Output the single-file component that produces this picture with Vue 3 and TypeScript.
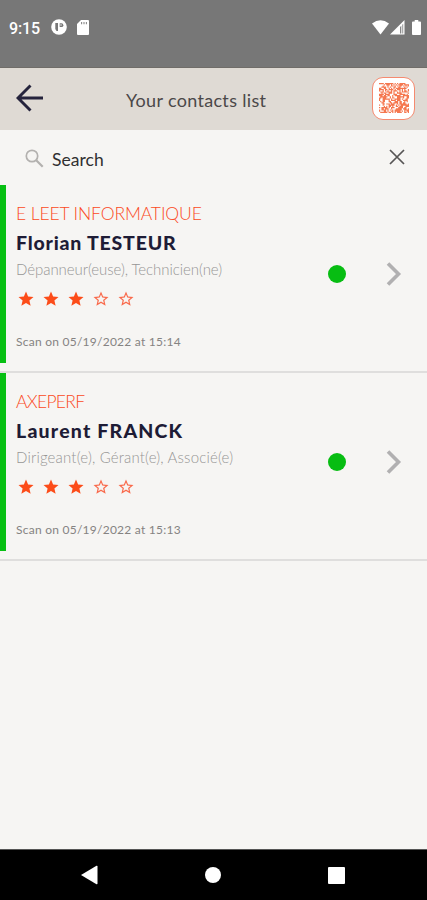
<script setup lang="ts">
interface Contact {
  company: string
  name: string
  jobs: string
  rating: number
  scan: string
  key: string
}

const contacts: Contact[] = [
  { key: 'florian', company: 'E LEET INFORMATIQUE', name: 'Florian TESTEUR', jobs: 'Dépanneur(euse), Technicien(ne)', rating: 3, scan: 'Scan on 05/19/2022 at 15:14' },
  { key: 'laurent', company: 'AXEPERF', name: 'Laurent FRANCK', jobs: 'Dirigeant(e), Gérant(e), Associé(e)', rating: 3, scan: 'Scan on 05/19/2022 at 15:13' },
]

// Modules of the QR badge, from a small seeded generator
const size = 25
let seed = 77
let qrPath = ''
for (let y = 0; y < size; y++) {
  for (let x = 0; x < size; x++) {
    seed ^= seed << 13
    seed ^= seed >>> 17
    seed ^= seed << 5
    if ((seed >>> 0) / 4294967296 < 0.6) qrPath += `M${x} ${y}h1v1h-1z`
  }
}
</script>

<template>
  <div class="screen">
    <header class="status">
      <span class="clock">9:15</span>
      <svg class="app-dot" viewBox="0 0 16 16"><circle cx="8" cy="8" r="7.8" fill="#fff" /><path d="M4.300 4h2.700v8H5.500L4.300 10z" fill="#777" /><path d="M8.700 4.300h1.800a1.700 1.700 0 0 1 0 3.700H8.700z" fill="#777" /><circle cx="10" cy="6" r=".7" fill="#fff" /></svg>
      <svg class="sd" viewBox="0 0 12 15"><path d="M4 0h7a1 1 0 0 1 1 1v13a1 1 0 0 1-1 1H1a1 1 0 0 1-1-1V4z" fill="#fff" /><path d="M4.6 2v2.3M7 2v2.3M9.4 2v2.3" stroke="#888" stroke-width="1.1" /></svg>
      <div class="signals">
        <svg width="17" height="15" viewBox="0 0 17 15"><path d="M0 3.5Q8.5-2.8 17 3.5L8.5 14.5z" fill="#fff" /></svg>
        <svg width="15" height="15" viewBox="0 0 15 15"><path d="M0 14.5 14.5 0v14.5z" fill="#fff" /><path d="M10 7v6.500h1.300V5.700zM12.300 4.700v8.800h.9V3.800z" fill="#888" /></svg>
        <svg class="battery" width="9" height="15" viewBox="0 0 10 15" preserveAspectRatio="none"><path d="M3 0h4v1.5h2a1 1 0 0 1 1 1V14a1 1 0 0 1-1 1H1a1 1 0 0 1-1-1V2.500a1 1 0 0 1 1-1h2z" fill="#fff" /></svg>
      </div>
    </header>

    <nav class="bar">
      <svg class="back" viewBox="0 0 28 28"><path d="M27 14H2M14.500 1.500 2 14l12.500 12.500" fill="none" stroke="#25233c" stroke-width="2.900" /></svg>
      <h1 class="title">Your contacts list</h1>
      <div class="qr">
        <svg viewBox="0 0 25 25"><path :d="qrPath" fill="#f5774f" /></svg>
      </div>
    </nav>

    <div class="search">
      <svg class="lens" viewBox="0 0 19 19"><circle cx="7" cy="7" r="5.700" fill="none" stroke="#b3b1af" stroke-width="1.700" /><path d="m11.200 11.200 6.500 6.500" stroke="#b3b1af" stroke-width="2.200" /></svg>
      <span class="search-text">Search</span>
      <svg class="clear" viewBox="0 0 16 16"><path d="m1 1 14 14M15 1 1 15" stroke="#565554" stroke-width="1.700" /></svg>
    </div>

    <main class="list">
      <article v-for="c in contacts" :key="c.key" class="item" :class="c.key">
        <div class="stripe"></div>
        <div class="info">
          <div class="company">{{ c.company }}</div>
          <div class="name">{{ c.name }}</div>
          <div class="jobs">{{ c.jobs }}</div>
          <div class="stars">
            <svg v-for="n in 5" :key="n" viewBox="0 0 24 24">
              <path v-if="n <= c.rating" d="m12 17.270 6.180 3.730-1.640-7.030L22 9.240l-7.190-.610L12 2 9.190 8.630 2 9.240l5.460 4.730L5.820 21z" fill="#fc4c19" />
              <path v-else d="m22 9.240-7.190-.620L12 2 9.190 8.630 2 9.240l5.460 4.730L5.820 21 12 17.270 18.180 21l-1.630-7.030zM12 15.400l-3.760 2.270 1-4.280-3.320-2.880 4.380-.380L12 6.100l1.710 4.040 4.380.380-3.320 2.880 1 4.280z" fill="#f9694a" />
            </svg>
          </div>
          <div class="scan">{{ c.scan }}</div>
        </div>
        <div class="dot"></div>
        <svg class="chevron" viewBox="0 0 16 24"><path d="m2 1.500 10.500 10.500L2 22.500" fill="none" stroke="#b1b0b1" stroke-width="3.600" /></svg>
      </article>
    </main>

    <footer class="system">
      <svg width="17" height="20" viewBox="0 0 17 20"><path d="M0 10 15.500.800q1-.3 1 .7v17q0 1-1 .7z" fill="#fff" /></svg>
      <svg width="16" height="16" viewBox="0 0 16 16"><circle cx="8" cy="8" r="8" fill="#fff" /></svg>
      <svg width="17" height="17" viewBox="0 0 17 17"><rect width="17" height="17" rx="1" fill="#fff" /></svg>
    </footer>
  </div>
</template>

<style>
body { background: #f6f5f3; }
</style>

<style scoped>
.screen { width: 427px; height: 900px; display: flex; flex-direction: column; background: #f6f5f3; font-family: Lato, "Liberation Sans", sans-serif; overflow: hidden; white-space: nowrap; }
.screen * { box-sizing: border-box; }
svg { display: block; flex: none; }
.status { height: 68px; flex: none; background: #777; border-bottom: 1px solid #706d69; display: flex; align-items: flex-start; padding: 19px 6px 0 9px; }
.clock { width: 42px; padding-top: 1px; font: 500 16px/18px Roboto, sans-serif; color: #fff; letter-spacing: -.15px; }
.app-dot { width: 16px; height: 16px; }
.sd { width: 12px; height: 15px; margin: 1px 0 0 10px; }
.signals { display: flex; margin: 1px 0 0 auto; gap: 1px; }
.battery { margin-left: 6px; }
.bar { height: 62px; flex: none; background: #dfdad4; display: flex; align-items: center; padding: 0 12px 0 16px; }
.back { width: 28px; height: 28px; margin-bottom: 2px; }
.title { margin: 2px 0 0 82px; font-size: 18px; line-height: 24px; font-weight: 400; color: #4b4849; letter-spacing: .32px; }
.qr { width: 43px; height: 43px; margin: 0 0 2px auto; border: 1.500px solid #f58a70; border-radius: 11px; background: #fff; display: grid; place-items: center; }
.qr svg { width: 30px; height: 30px; }
.search { height: 55px; flex: none; display: flex; align-items: center; padding: 0 22px 0 25px; }
.lens { width: 19px; height: 19px; margin-top: 1px; }
.search-text { margin: 5px 0 0 8px; font-size: 17.500px; line-height: 22px; color: #302f30; letter-spacing: .05px; }
.clear { width: 16px; height: 16px; margin: 0 0 1px auto; }
.item { height: 188px; border-bottom: 2px solid #dfdedd; display: flex; align-items: center; padding-right: 25px; }
.stripe { width: 6px; height: 178px; align-self: flex-start; background: #07c013; }
.info { flex: 1; height: 100%; padding: 16px 0 0 10px; }
.company { height: 26px; font-size: 17.500px; line-height: 26px; font-weight: 300; color: #fb4a24; letter-spacing: -.12px; }
.laurent .company { letter-spacing: -.7px; }
.name { height: 31px; font-size: 19.500px; line-height: 31px; font-weight: 900; color: #1e1c36; letter-spacing: .8px; }
.laurent .name { letter-spacing: 1.200px; }
.jobs { height: 24px; font-size: 15px; line-height: 22px; font-weight: 300; color: #969595; letter-spacing: -.06px; }
.laurent .jobs { letter-spacing: .17px; }
.stars { height: 36px; display: flex; gap: 7px; padding: 8px 0 0 .7px; }
.stars svg { width: 18px; height: 18px; }
.scan { height: 24px; margin-top: 12px; font-size: 12px; line-height: 24px; font-weight: 400; color: #858382; letter-spacing: .25px; }
.dot { width: 18px; height: 18px; margin: 0 40px 9px 0; border-radius: 50%; background: #07bd12; }
.chevron { width: 16px; height: 24px; margin-bottom: 9px; }
.system { margin-top: auto; height: 51px; flex: none; background: #000; border-top: 1px solid #555; display: flex; align-items: center; padding: 0 82px 0 81px; justify-content: space-between; }
</style>
